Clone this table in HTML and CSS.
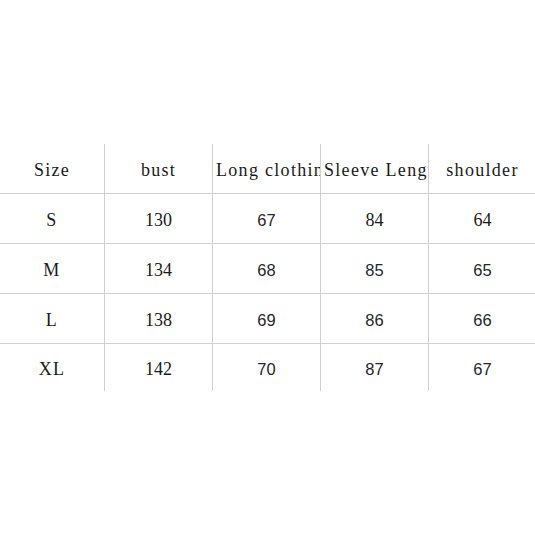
FILE: index.html
```html
<!DOCTYPE html>
<html>
<head>
<meta charset="utf-8">
<link rel="stylesheet" href="styles.css">
</head>
<body>
<div class="page">
  <div class="grid">
    <div class="cell serif">Size</div>
    <div class="cell serif">bust</div>
    <div class="cell serif">Long clothing</div>
    <div class="cell serif">Sleeve Length</div>
    <div class="cell serif">shoulder</div>

    <div class="cell serif">S</div>
    <div class="cell serif num">130</div>
    <div class="cell sans">67</div>
    <div class="cell serif num">84</div>
    <div class="cell serif num">64</div>

    <div class="cell serif">M</div>
    <div class="cell serif num">134</div>
    <div class="cell sans">68</div>
    <div class="cell sans">85</div>
    <div class="cell sans">65</div>

    <div class="cell serif">L</div>
    <div class="cell serif num">138</div>
    <div class="cell sans">69</div>
    <div class="cell sans">86</div>
    <div class="cell sans">66</div>

    <div class="cell serif">XL</div>
    <div class="cell serif num">142</div>
    <div class="cell sans">70</div>
    <div class="cell sans">87</div>
    <div class="cell sans">67</div>
  </div>
</div>
</body>
</html>
```

FILE: styles.css
```css
html, body {
  margin: 0;
  padding: 0;
  background: #ffffff;
}
.page {
  width: 535px;
  height: 535px;
  padding-top: 144px;
  box-sizing: border-box;
}
.grid {
  display: grid;
  grid-template-columns: 104px 107px 107px 107px 107px;
  grid-template-rows: 49px 49px 49px 49px 47px;
  gap: 1px;
  background: #d0d0d0;
  width: 535px;
}
.cell {
  background: #ffffff;
  display: flex;
  align-items: center;
  justify-content: safe center;
  text-align: center;
  overflow: hidden;
  white-space: nowrap;
  padding: 3px 3px 0 3px;
  color: #1a1a1a;
}
.serif {
  font-family: "Liberation Serif", "DejaVu Serif", serif;
  font-size: 18px;
  letter-spacing: 1.3px;
}
.num {
  letter-spacing: 0;
}
.sans {
  font-family: "Liberation Sans", Arial, sans-serif;
  font-size: 16.5px;
  color: #262626;
}
```
